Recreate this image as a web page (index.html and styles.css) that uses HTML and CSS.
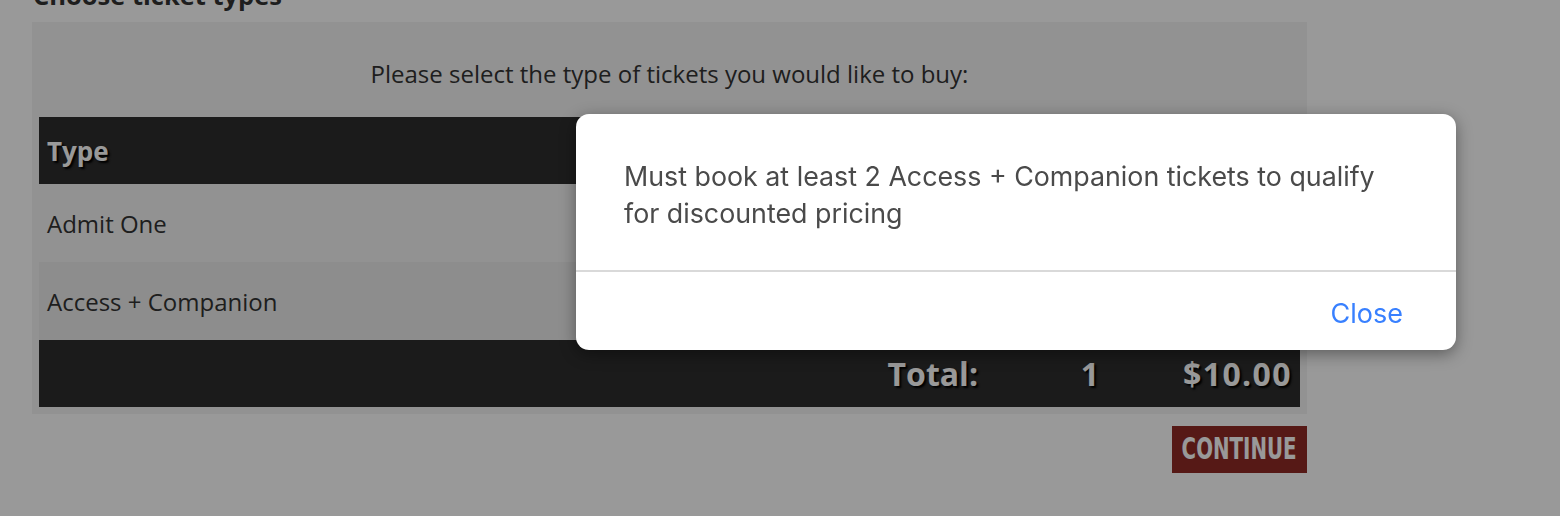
FILE: index.html
```html
<!DOCTYPE html>
<html lang="en">
<head>
<meta charset="utf-8">
<title>Choose ticket types</title>
<link rel="stylesheet" href="styles.css">
</head>
<body>
<div class="page">
  <h2 class="page-title">Choose ticket types</h2>
  <section class="panel">
    <p class="intro">Please select the type of tickets you would like to buy:</p>
    <div class="tickets">
      <div class="trow thead">
        <div class="cell c-type">Type</div>
        <div class="cell c-price">Price</div>
        <div class="cell c-qty">Qty</div>
        <div class="cell c-sub">Subtotal</div>
      </div>
      <div class="trow tbody">
        <div class="cell c-type">Admit One</div>
        <div class="cell c-price">$10.00</div>
        <div class="cell c-qty">1</div>
        <div class="cell c-sub">$10.00</div>
      </div>
      <div class="trow tbody alt">
        <div class="cell c-type">Access + Companion</div>
        <div class="cell c-price">$10.00</div>
        <div class="cell c-qty">0</div>
        <div class="cell c-sub">$0.00</div>
      </div>
      <div class="trow tfoot">
        <div class="cell c-type"></div>
        <div class="cell c-price">Total:</div>
        <div class="cell c-qty">1</div>
        <div class="cell c-sub">$10.00</div>
      </div>
    </div>
  </section>
  <div class="actions">
    <button class="btn-continue" type="button"><span class="btn-label">CONTINUE</span></button>
  </div>
</div>

<div class="backdrop"></div>
<div class="alert" role="alertdialog">
  <div class="alert-message">Must book at least 2 Access + Companion tickets to qualify for discounted pricing</div>
  <div class="alert-buttons">
    <button class="alert-button" type="button">Close</button>
  </div>
</div>
</body>
</html>
```

FILE: styles.css
```css
* { box-sizing: border-box; }

html, body {
  margin: 0;
  padding: 0;
  background: #ffffff;
  overflow: hidden;
}

body {
  font-family: "Open Sans", "DejaVu Sans", sans-serif;
  color: #333333;
  height: 516px;
}

.page {
  padding-left: 32px;
  width: 1307px;
}

.page-title {
  font-family: "Open Sans", sans-serif;
  font-weight: 700;
  font-size: 25.5px;
  line-height: 32px;
  margin: -21px 0 11px 1px;
  color: #333333;
  white-space: nowrap;
}

.panel {
  background: #f3f3f3;
  padding: 7px;
}

.intro {
  margin: 0;
  padding: 28px 0 27px;
  text-align: center;
  font-size: 24px;
  line-height: 33px;
  color: #333333;
}

.tickets {
  display: flex;
  flex-direction: column;
}

.trow {
  display: grid;
  grid-template-columns: 1fr 200px 160px 130px;
  align-items: center;
}

.cell {
  white-space: nowrap;
}

.c-type { padding-left: 8px; }
.c-price { text-align: right; padding-right: 32px; }
.c-qty { text-align: center; }
.c-sub { text-align: right; padding-right: 9px; }

.thead {
  background: #2d2d2d;
  height: 67px;
  color: #ffffff;
  font-weight: 700;
  font-size: 26px;
  text-shadow: 2px 2px 2px #000000;
}

.tbody {
  height: 78px;
  font-size: 24px;
  color: #333333;
}

.tbody.alt { background: #ebebeb; }

.tfoot {
  background: #2d2d2d;
  height: 67px;
  color: #ffffff;
  font-weight: 700;
  font-size: 32px;
  text-shadow: 2px 2px 2px #000000;
}

.tfoot .c-sub { letter-spacing: 1.4px; padding-right: 8px; }

.actions {
  display: flex;
  justify-content: flex-end;
  margin-top: 12px;
}

.btn-continue {
  width: 135px;
  height: 47px;
  border: 0;
  padding: 0 0 2px;
  background: #8f2b26;
  color: #ffffff;
  display: flex;
  align-items: center;
  justify-content: center;
  overflow: hidden;
}

.btn-label {
  display: inline-block;
  font-family: "DejaVu Sans", sans-serif;
  font-weight: 700;
  font-size: 30px;
  line-height: 30px;
  letter-spacing: 0;
  transform: scaleX(0.66);
  white-space: nowrap;
}

.backdrop {
  position: fixed;
  inset: 0;
  background: rgba(0, 0, 0, 0.4);
}

.alert {
  position: absolute;
  left: 576px;
  top: 114px;
  width: 880px;
  height: 236px;
  background: #ffffff;
  border-radius: 13px;
  box-shadow: 0 4px 16px rgba(0, 0, 0, 0.4);
  display: flex;
  flex-direction: column;
  font-family: Inter, "Liberation Sans", sans-serif;
}

.alert-message {
  height: 158px;
  padding: 44px 60px 0 48px;
  font-size: 26.8px;
  line-height: 37px;
  color: #4a4a4a;
  border-bottom: 2px solid #d9d9d9;
}

.alert-buttons {
  flex: 1;
  display: flex;
  justify-content: flex-end;
  align-items: center;
  padding: 4px 53px 0 0;
}

.alert-button {
  border: 0;
  background: none;
  padding: 0;
  font-family: Inter, "Liberation Sans", sans-serif;
  font-size: 27px;
  color: #3880ff;
}
```
